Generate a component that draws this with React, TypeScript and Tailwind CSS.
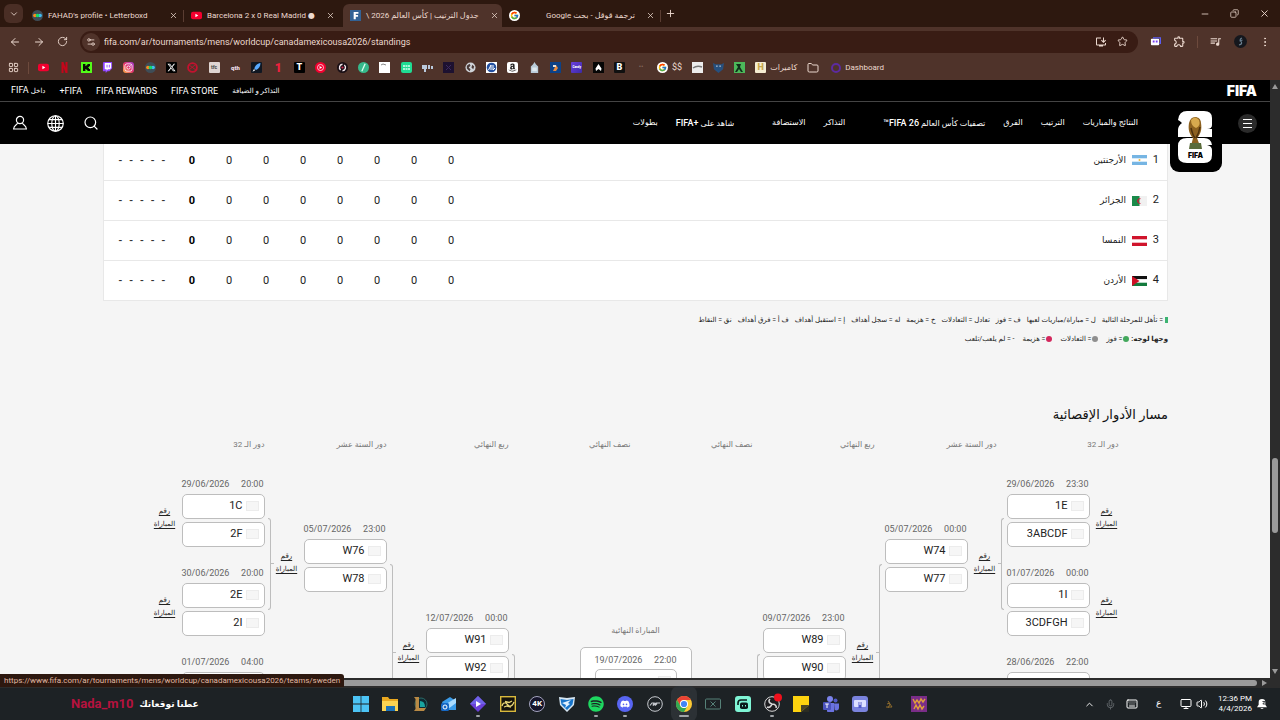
import type { ReactNode } from 'react';
import {
  ArrowLeft,
  ArrowRight,
  ChevronDown,
  ChevronUp,
  Copy,
  EllipsisVertical,
  Folder,
  Keyboard,
  LayoutGrid,
  Mic,
  Minus,
  Monitor,
  Plus,
  RotateCw,
  Search,
  Settings2,
  Star,
  Volume2,
  X,
} from 'lucide-react';
import { FaAmazon, FaDiscord, FaInstagram, FaSpotify } from 'react-icons/fa';
import { FaXTwitter } from 'react-icons/fa6';
import { FcGoogle } from 'react-icons/fc';
import { MdInstallDesktop, MdOutlineExtension, MdQueueMusic } from 'react-icons/md';

type Match = {
  date: string;
  time: string;
  teams: [string, string];
};

const leftRounds: Match[][] = [
  [
    { date: '29/06/2026', time: '20:00', teams: ['1C', '2F'] },
    { date: '30/06/2026', time: '20:00', teams: ['2E', '2I'] },
    { date: '01/07/2026', time: '04:00', teams: ['', ''] },
  ],
  [{ date: '05/07/2026', time: '23:00', teams: ['W76', 'W78'] }],
  [{ date: '12/07/2026', time: '00:00', teams: ['W91', 'W92'] }],
];

const rightRounds: Match[][] = [
  [{ date: '09/07/2026', time: '23:00', teams: ['W89', 'W90'] }],
  [{ date: '05/07/2026', time: '00:00', teams: ['W74', 'W77'] }],
  [
    { date: '29/06/2026', time: '23:30', teams: ['1E', '3ABCDF'] },
    { date: '01/07/2026', time: '00:00', teams: ['1I', '3CDFGH'] },
    { date: '28/06/2026', time: '22:00', teams: ['', ''] },
  ],
];

const roundTitles = [
  'دور الـ 32',
  'دور الستة عشر',
  'ربع النهائي',
  'نصف النهائي',
  'نصف النهائي',
  'ربع النهائي',
  'دور الستة عشر',
  'دور الـ 32',
];

/* ---------- browser ---------- */

function LetterboxdIcon() {
  return (
    <svg viewBox="0 0 12 12" className="size-[11px] shrink-0">
      <circle cx="6" cy="6" r="6" fill="#3f4d57" />
      <circle cx="3.2" cy="6" r="2" fill="#ff8a1c" />
      <circle cx="8.8" cy="6" r="2" fill="#3fbcf4" />
      <circle cx="6" cy="6" r="2" fill="#16d965" />
    </svg>
  );
}

function YoutubeIcon() {
  return (
    <svg viewBox="0 0 12 12" className="size-[11px] shrink-0">
      <rect y="1.8" width="12" height="8.4" rx="2.2" fill="#f3002f" />
      <path d="M4.8 4.2v3.6L8 6z" fill="#fff" />
    </svg>
  );
}

type TabProps = { icon: ReactNode; title: string; active?: boolean; rtl?: boolean; divider?: boolean };

function Tab({ icon, title, active, rtl, divider }: TabProps) {
  return (
    <div
      className={`mt-1 flex w-[159px] items-center gap-[5px] rounded-t-md pr-2 pl-[7px] ${active ? 'bg-[#4f332a]' : ''}`}
    >
      {icon}
      <button
        role="tab"
        aria-selected={!!active}
        dir={rtl ? 'rtl' : 'ltr'}
        className={`flex-1 text-start text-[8px] leading-4 whitespace-nowrap ${rtl ? 'pr-[6px]' : ''}`}
      >
        {title}
      </button>
      <button aria-label="Close tab">
        <X className="size-[9px]" />
      </button>
      {divider && <span className="-mr-2 h-3 w-px bg-[#5a3d32]" />}
    </div>
  );
}

function TabStrip() {
  return (
    <div className="flex h-[27px] items-stretch bg-[#2d180f] pl-1">
      <button aria-label="Search tabs" className="mt-1 flex size-[19px] items-center justify-center rounded-md bg-[#4a2e25]">
        <ChevronDown className="size-[10px]" />
      </button>
      <div role="tablist" className="ml-[2px] flex">
        <Tab icon={<LetterboxdIcon />} title="FAHAD's profile • Letterboxd" divider />
        <Tab icon={<YoutubeIcon />} title="Barcelona 2 x 0 Real Madrid ●" />
        <Tab
          icon={
            <svg viewBox="0 0 12 12" className="size-[11px] shrink-0">
              <path d="M0 0h12v12H0z" fill="#326295" />
              <path d="M4 2.2h5.2v2H6.3v1.3h2.5v1.9H6.3V10H4z" fill="#fff" />
            </svg>
          }
          title="جدول الترتيب | كأس العالم 2026 \"
          active
          rtl
        />
        <Tab
          icon={<span className="rounded-full bg-white p-px"><FcGoogle className="size-[9px]" /></span>}
          title="ترجمة قوقل - بحث Google"
          rtl
          divider
        />
      </div>
      <button aria-label="New tab" className="ml-1">
        <Plus className="size-[11px]" />
      </button>
      <div className="ml-auto flex items-center gap-5 pr-[10px]">
        <button aria-label="Minimize"><Minus className="size-[10px]" /></button>
        <button aria-label="Restore"><Copy className="size-[9px] -scale-x-100" /></button>
        <button aria-label="Close"><X className="size-[11px]" /></button>
      </div>
    </div>
  );
}

function Toolbar() {
  return (
    <div className="flex h-[29px] items-center pr-[9px] pl-[9px]">
      <div className="flex w-[71px] items-center gap-3">
        <button aria-label="Back"><ArrowLeft className="size-3" /></button>
        <button aria-label="Forward"><ArrowRight className="size-3" /></button>
        <button aria-label="Reload"><RotateCw className="size-[11px]" /></button>
      </div>
      <div className="flex h-[22px] flex-1 items-center gap-1 rounded-full bg-[#391c14] pr-[10px] pl-[2px]">
        <button aria-label="Site information" className="flex size-[18px] items-center justify-center rounded-full bg-[#50332a]">
          <Settings2 className="size-[10px]" />
        </button>
        <input
          aria-label="Address"
          readOnly
          className="flex-1 bg-transparent text-[9px] leading-4 outline-none"
          value="fifa.com/ar/tournaments/mens/worldcup/canadamexicousa2026/standings"
        />
        <button aria-label="Install app"><MdInstallDesktop className="size-3" /></button>
        <button aria-label="Bookmark" className="ml-[6px]"><Star className="size-[11px]" /></button>
      </div>
      <div className="ml-3 flex items-center gap-3">
        <svg viewBox="0 0 12 12" className="size-[11px]">
          <rect x="1" y="3" width="9" height="7" rx="1" fill="#fff" />
          <path d="M4 3V2h7.5v6H10" stroke="#5b5cf0" strokeWidth="1.4" fill="none" />
          <path d="M3 5h2v2H3zM6.3 5h2v2h-2z" fill="#7a3ff2" />
        </svg>
        <button aria-label="Extensions"><MdOutlineExtension className="size-[13px]" /></button>
        <span className="-mx-px h-3 w-px bg-[#6d4a3d]" />
        <button aria-label="Media"><MdQueueMusic className="size-[13px]" /></button>
        <svg viewBox="0 0 13 13" className="size-[13px]">
          <circle cx="6.5" cy="6.5" r="6.5" fill="#15171d" />
          <path d="M8 3q-3 1-1 3.500T5 10M5.500 6l3-1" stroke="#6b8090" strokeWidth="1.200" fill="none" />
        </svg>
        <button aria-label="Browser menu"><EllipsisVertical className="size-3" /></button>
      </div>
    </div>
  );
}

type TileProps = { className: string; children?: ReactNode };

function Tile({ className, children }: TileProps) {
  return (
    <span className={`flex size-[11px] items-center justify-center rounded-[1px] leading-none font-black ${className}`}>
      {children}
    </span>
  );
}

const bookmarks: ReactNode[] = [
  <YoutubeIcon />,
  <svg viewBox="0 0 11 11" className="size-[11px]"><path d="M2.5 0h2l2 5.5V0h2v11h-2l-2-5.5V11h-2z" fill="#c4061b" /></svg>,
  <svg viewBox="0 0 11 11" className="size-[11px]"><path d="M0 0h11v11H0z" fill="#53fc18" /><path d="M2 2h2.4v2h1V3h1V2H9v2.3H8v1h-.9v.6H8v1h1V9H6.4V8h-1V7h-1v2H2z" fill="#0a1005" /></svg>,
  <svg viewBox="0 0 12 12" className="size-[11px]"><path d="M1.500 0H11v7L8 10H6l-2 2v-2H1V2z" fill="#9146ff" /><path d="M3 1h7v5.500L8.500 8h-2L5 9.500V8H3z" fill="#fff" /><path d="M5.500 3v3M8 3v3" stroke="#9146ff" /></svg>,
  <Tile className="rounded-[3px] bg-linear-to-tr from-[#fdb13a] via-[#e4316c] to-[#a033d6]"><FaInstagram className="size-[9px] text-white" /></Tile>,
  <LetterboxdIcon />,
  <Tile className="bg-black"><FaXTwitter className="size-[9px] text-white" /></Tile>,
  <svg viewBox="0 0 12 12" className="size-[11px]"><circle cx="6" cy="6" r="4.8" fill="none" stroke="#c3122f" strokeWidth="2" /><path d="M2 3l8 6M3 8l6-5" stroke="#c3122f" /></svg>,
  <Tile className="bg-[#dfd5d2] text-[5px] text-[#555]">tfc</Tile>,
  <Tile className="text-[6px] text-[#eadde5]">qth</Tile>,
  <svg viewBox="0 0 11 11" className="size-[11px]"><rect width="11" height="11" rx="1" fill="#101722" /><path d="M9.500 1C6 1.300 4 4 3.300 6.500L5 8c2.500-1 4.500-3.500 4.500-7z" fill="#58a9ff" /><path d="M3 7l1.200 1.200L1.500 9.800z" fill="#fff" /></svg>,
  <Tile className="text-[12px] text-[#f0203f]">1</Tile>,
  <Tile className="bg-black text-[9px] text-white">T</Tile>,
  <svg viewBox="0 0 12 12" className="size-[11px]"><circle cx="6" cy="6" r="6" fill="#f3002f" /><circle cx="6" cy="6" r="3.300" fill="none" stroke="#fff" strokeWidth=".8" /><path d="M5 4.300v3.400L7.800 6z" fill="#fff" /></svg>,
  <svg viewBox="0 0 12 12" className="size-[11px]"><circle cx="6" cy="6" r="6" fill="#1b1016" /><path d="M6 2.500a3.500 3.500 0 00-2 6.200M6 9.500a3.500 3.500 0 002-6.200" stroke="#f4e8ee" strokeWidth="1.500" fill="none" /><circle cx="6" cy="6" r="1.200" fill="#d02653" /></svg>,
  <svg viewBox="0 0 12 12" className="size-[11px]"><circle cx="6" cy="6" r="6" fill="#36b98b" /><path d="M7.800 2L4.200 10" stroke="#d7fff0" strokeWidth="1.400" /></svg>,
  <svg viewBox="0 0 11 11" className="size-[11px]"><path d="M0 0h11v11H0z" fill="#fff" /><path d="M2 3l2-1 3 1" stroke="#888" fill="none" /></svg>,
  <svg viewBox="0 0 11 11" className="size-[11px]"><rect width="11" height="11" rx="2" fill="#1fdc93" /><path d="M2 4h7M2 7h7" stroke="#d8fff0" strokeWidth="1.500" strokeDasharray="2 .5" /></svg>,
  <svg viewBox="0 0 11 11" className="size-[11px]"><path d="M0 3h5v4H4v3H2V7H0zM6 3h2v4H6zM9 4h2v3H9z" fill="#b9c9dc" /></svg>,
  <svg viewBox="0 0 11 11" className="size-[11px]"><path d="M0 0h11v11H0z" fill="#1d1130" /><path d="M3 3l5 5M8 3L3 8" stroke="#3d2a60" /></svg>,
  <svg viewBox="0 0 12 12" className="size-[11px]"><circle cx="6" cy="6" r="5.500" fill="#cfd3d8" /><path d="M2 4l3-2 1 2-2 2 2 2-1 2-3-3zM8 3l2 2-1 3-2-2z" fill="#4a3a38" /></svg>,
  <svg viewBox="0 0 11 11" className="size-[11px]"><path d="M0 0h11v11H0z" fill="#fff" /><circle cx="5.500" cy="5.500" r="4.800" fill="#2450a0" /><path d="M2.500 8L5 3v5M7 3v5M7 8l2-2" stroke="#fff" fill="none" /></svg>,
  <Tile className="rounded-[2px] bg-white"><FaAmazon className="size-[9px] text-[#221f1f]" /></Tile>,
  <svg viewBox="0 0 12 12" className="size-[11px]"><path d="M6 0l1.500 2.500L10 5v7H2V5l2.500-2.500z" fill="#b9cbd8" /><path d="M3.500 6h5v4h-5z" fill="#dfe9ef" /></svg>,
  <svg viewBox="0 0 11 11" className="size-[11px]"><path d="M0 0h11v11H0z" fill="#0d4287" /><path d="M3 9l3-6 2 3-2 3z" fill="#e8893b" /><path d="M3 3h3v2H3z" fill="#e8e2d8" /></svg>,
  <Tile className="bg-linear-to-br from-[#6b3fe0] to-[#3c2aa5] text-[3px] text-white">Candy</Tile>,
  <svg viewBox="0 0 11 11" className="size-[11px]"><path d="M0 0h11v11H0z" fill="#060606" /><path d="M5.500 2L8.500 6.500 8 9 5.500 7 3 9l-.5-2.500z" fill="#fff" /></svg>,
  <Tile className="bg-[#101010] text-[9px] text-white">B</Tile>,
];

function Bookmarks() {
  return (
    <nav aria-label="Bookmarks" className="flex h-6 items-center pb-px pl-2 text-[9px]">
      <button aria-label="Apps"><LayoutGrid className="size-[11px]" /></button>
      <span className="mx-[9px] h-3 w-px bg-[#6d4a3d]" />
      <div className="flex w-[587px] items-center justify-between">
        {bookmarks.map((icon, i) => (
          <a key={i} href="#" aria-label={`Bookmark ${i + 1}`}>
            {icon}
          </a>
        ))}
      </div>
      <span className="mx-3 w-[8px] text-center text-[7px] text-[#85685e]">••</span>
      <a href="#" className="flex items-center gap-1">
        <span className="rounded-full bg-white p-px"><FcGoogle className="size-[9px]" /></span>$$
      </a>
      <div className="ml-[10px] flex items-center gap-[10px]">
        <svg viewBox="0 0 11 11" className="size-[11px]"><path d="M0 0h11v11H0z" fill="#ececec" /><path d="M1 6q4-3 9-1" stroke="#777" strokeWidth="1.500" fill="none" /></svg>
        <svg viewBox="0 0 12 12" className="size-[11px]"><path d="M0 1l3 1.500h6L12 1l-1 7-5 4-5-4z" fill="#27507e" /><path d="M3.500 4.500h1.500M7 4.500h1.500" stroke="#fff" /></svg>
        <svg viewBox="0 0 11 11" className="size-[11px]"><path d="M0 0h11v11H0z" fill="#4cb85a" /><path d="M2 2h5L6 5l3 5H7L5 7 3 10H1l3-5z" fill="#10301a" /></svg>
        <a href="#" className="flex items-center gap-1">
          <Tile className="bg-[#f5ecd2] text-[9px] text-[#c8a84c]">H</Tile>
          <span className="text-[8px]">كاميرات</span>
        </a>
      </div>
      <Folder className="ml-[10px] size-3" />
      <a href="#" className="ml-3 flex items-center gap-1 text-[8px]">
        <span className="size-[10px] rounded-full border-2 border-[#5c2ba0]" />
        Dashboard
      </a>
    </nav>
  );
}

/* ---------- site header ---------- */

function Emblem() {
  return (
    <svg viewBox="0 0 52 62" className="h-[62px] w-[52px]">
      <path d="M0 0h52v53a9 9 0 0 1-9 9H9a9 9 0 0 1-9-9z" fill="#000" />
      <path d="M8 10q1-9 9-9h17q8 0 8 7v7q0 4-5 4h5v8H8v-7q0-4 4-7-2-2-4-3z" fill="#fff" />
      <path d="M17 28h17q7 0 8 7h-5q5 1 5 5v5q0 8-8 8H17q-9 0-9-8V36q0-8 9-8z" fill="#fff" />
      <path d="M21 36l2-8c-4-4-5-9-4-15 1-4 3-6 6-6s6 2 6 6c1 6 0 11-4 15l3 8z" fill="#8d611f" />
      <path d="M21 10q4-5 8 0 2 6-3 8-5-2-5-8z" fill="#d7a94e" />
      <path d="M21 18q2 8 4 10M30 17q-1 6-4 11" stroke="#4d300d" strokeWidth="1.500" fill="none" />
      <path d="M20 33h11l1 6H19z" fill="#5a6b3a" />
      <text x="25.500" y="48" textAnchor="middle" fontSize="7" fontWeight="900" fontFamily="Inter, sans-serif" fill="#000">FIFA</text>
    </svg>
  );
}

function SiteHeader() {
  return (
    <header className="relative z-10 bg-black text-white">
      <div className="flex h-[22px] items-center border-b border-[#444] pr-[13px] pl-[11px] text-[9px] leading-3">
        <nav className="flex items-center gap-[14px]">
          <a href="#" dir="rtl"><span className="text-[7px]">داخل</span> FIFA</a>
          <a href="#" dir="rtl">FIFA+</a>
          <a href="#">FIFA REWARDS</a>
          <a href="#">FIFA STORE</a>
          <a href="#" dir="rtl" className="text-[7px]">التذاكر و الضيافة</a>
        </nav>
        <a href="#" className="ml-auto font-[Inter] text-[14px] font-black">FIFA</a>
      </div>
      <div className="flex h-[42px] items-center pr-[13px] pl-3">
        <div className="flex items-center gap-[19px]">
          <button aria-label="Account">
            <svg viewBox="0 0 16 16" className="size-4" fill="none" stroke="#fff" strokeWidth="1.200">
              <circle cx="8" cy="5" r="3.600" />
              <path d="M5.500 8C5 10.500 2 9.800 1.600 14h12.800C14 9.800 11 10.500 10.500 8" />
            </svg>
          </button>
          <button aria-label="Language">
            <svg viewBox="0 0 16 16" className="size-[17px]" fill="none" stroke="#fff" strokeWidth="1.100">
              <circle cx="8" cy="8" r="7.300" />
              <ellipse cx="8" cy="8" rx="3.500" ry="7.300" />
              <path d="M8 .7v14.600M.7 8h14.600M1.800 4.300h12.400M1.800 11.700h12.400" />
            </svg>
          </button>
          <button aria-label="Search"><Search className="size-4" strokeWidth={1.8} /></button>
        </div>
        <nav dir="rtl" className="mr-8 ml-auto flex items-center gap-[18px] text-[8px] leading-3 font-medium whitespace-nowrap">
          <a href="#">النتائج والمباريات</a>
          <a href="#">الترتيب</a>
          <a href="#">الفرق</a>
          <a href="#">تصفيات كأس العالم <span className="text-[9px]">FIFA 26™</span></a>
          <a href="#" className="ms-5">التذاكر</a>
          <a href="#">الاستضافة</a>
          <a href="#" className="ms-5">شاهد على <span className="text-[9px]">+FIFA</span></a>
          <a href="#">بطولات</a>
        </nav>
        <a href="#" aria-label="FIFA World Cup 26" className="h-[27px] self-start pt-[8px]">
          <Emblem />
        </a>
        <button aria-label="Menu" className="ml-4 flex size-[19px] flex-col items-center justify-center gap-[3px] rounded-full bg-[#2b2b2b]">
          <span className="h-px w-[9px] bg-white" />
          <span className="h-px w-[9px] bg-white" />
          <span className="h-px w-[9px] bg-white" />
        </button>
      </div>
    </header>
  );
}

/* ---------- standings ---------- */

const flags = {
  argentina: (
    <svg viewBox="0 0 15 10" className="h-[10px] w-[15px]">
      <path d="M0 0h15v10H0z" fill="#76b5e3" />
      <path d="M0 3.300h15v3.400H0z" fill="#fff" />
      <circle cx="7.500" cy="5" r="1" fill="#f1b83b" />
    </svg>
  ),
  algeria: (
    <svg viewBox="0 0 15 10" className="h-[10px] w-[15px]">
      <path d="M0 0h15v10H0z" fill="#f1f1f1" />
      <path d="M0 0h7.500v10H0z" fill="#1a8a4a" />
      <path d="M9.300 3.200a2.500 2.500 0 1 0 0 3.600 2 2 0 1 1 0-3.600z" fill="#d21034" />
    </svg>
  ),
  austria: (
    <svg viewBox="0 0 15 10" className="h-[10px] w-[15px]">
      <path d="M0 0h15v10H0z" fill="#d0142c" />
      <path d="M0 3.300h15v3.400H0z" fill="#fff" />
    </svg>
  ),
  jordan: (
    <svg viewBox="0 0 15 10" className="h-[10px] w-[15px]">
      <path d="M0 0h15v3.300H0z" fill="#111" />
      <path d="M0 3.300h15v3.400H0z" fill="#fff" />
      <path d="M0 6.700h15V10H0z" fill="#137a3d" />
      <path d="M0 0l7.500 5L0 10z" fill="#ce1126" />
    </svg>
  ),
};

const teams = [
  { name: 'الأرجنتين', flag: flags.argentina },
  { name: 'الجزائر', flag: flags.algeria },
  { name: 'النمسا', flag: flags.austria },
  { name: 'الأردن', flag: flags.jordan },
];

function Standings() {
  return (
    <table dir="rtl" className="-mt-1 w-full border-x border-[#e8e8e8] bg-white text-[11px] text-[#222]">
      <tbody>
        {teams.map((team, i) => (
          <tr key={team.name} className="h-10 border-b border-[#e8e8e8]">
            <th scope="row" className="ps-[8px] pt-px text-start font-normal">
              <div className="flex items-center">
                <span className="w-3">{i + 1}</span>
                {team.flag}
                <a href="#" className="ms-[6px] text-[9px]">{team.name}</a>
              </div>
            </th>
            {[0, 0, 0, 0, 0, 0, 0].map((value, col) => (
              <td key={col} className="w-[37px] pt-[2px] text-center">{value}</td>
            ))}
            <td className="w-[37px] pt-[2px] text-center font-bold text-black">0</td>
            <td className="w-[70px] pt-[2px]">
              <div className="flex justify-center gap-[7px] pr-px pl-[7px] font-medium text-[#333]">
                {[1, 2, 3, 4, 5].map((game) => (
                  <span key={game}>-</span>
                ))}
              </div>
            </td>
          </tr>
        ))}
      </tbody>
    </table>
  );
}

const abbreviations = [
  'ل = مباراة/مباريات لعبها',
  'ف = فوز',
  'تعادل = التعادلات',
  'خ = هزيمة',
  'له = سجل أهداف',
  'إ = استقبل أهداف',
  'ف أ = فرق أهداف',
  'نق = النقاط',
];

function Legend() {
  return (
    <div dir="rtl" className="mt-[13px] flex flex-col gap-[7px] text-[7px] leading-3 whitespace-nowrap text-[#222]">
      <div className="flex gap-[6px]">
        <span className="flex items-center gap-[2px]">
          <span className="h-[6px] w-[3px] bg-[#3cb371]" />= تأهل للمرحلة التالية
        </span>
        {abbreviations.map((item) => (
          <span key={item}>{item}</span>
        ))}
      </div>
      <div className="flex gap-[8px]">
        <span className="flex items-center gap-[2px]">
          <b>وجها لوجه:</b>
          <span className="flex items-center gap-[1px]"><i className="size-[6px] rounded-full bg-[#43a85c]" />= فوز</span>
        </span>
        <span className="flex items-center gap-[1px]"><i className="size-[6px] rounded-full bg-[#8f8f8f]" />= التعادلات</span>
        <span className="flex items-center gap-[1px]"><i className="size-[6px] rounded-full bg-[#d3275c]" />= هزيمة</span>
        <span>- = لم يلعب/تلعب</span>
      </div>
    </div>
  );
}

/* ---------- knockout bracket ---------- */

function TeamSlot({ code }: { code: string }) {
  return (
    <div className="flex h-[25px] items-center justify-end gap-[3px] rounded-[5px] border border-[#bdbdbd] bg-white pr-[5px] text-[11px] text-[#222]">
      {code}
      <span className="h-[10px] w-[13px] border border-[#ececec] bg-[#f6f6f6]" />
    </div>
  );
}

function MatchCard({ match, side }: { match: Match; side: 'left' | 'right' }) {
  return (
    <div className={`flex h-[70px] ${side === 'left' ? 'flex-row-reverse' : ''}`}>
      <div className="flex w-[83px] flex-col gap-[3px]">
        <div className="flex justify-between pr-px text-[9px] leading-[14px] text-[#666]">
          <span>{match.date}</span>
          <span>{match.time}</span>
        </div>
        {match.teams.map((code, i) => (
          <TeamSlot key={i} code={code} />
        ))}
      </div>
      <a
        href="#"
        dir="rtl"
        className={`flex-1 pt-7 text-center text-[7px] leading-[13px] text-[#222] underline underline-offset-2 ${side === 'left' ? 'pr-[6px]' : 'pl-[6px]'}`}
      >
        رقم المباراة
      </a>
    </div>
  );
}

// one entry per round, outermost first
const roundOffset = ['pt-0', 'pt-[45px]', 'pt-[134px]'];
const connectorSize = ['mt-[41px] h-[92px]', 'mt-[87px] h-[178px]', 'mt-[177px] h-[356px]'];

type RoundProps = { matches: Match[]; depth: number; side: 'left' | 'right' };

function Round({ matches, depth, side }: RoundProps) {
  const left = side === 'left';
  return (
    <div className={`flex w-[122px] ${left ? '' : 'flex-row-reverse'}`}>
      <div className={`flex flex-1 flex-col gap-[19px] ${roundOffset[depth]}`}>
        {matches.map((match) => (
          <MatchCard key={match.date} match={match} side={side} />
        ))}
      </div>
      <div className={`flex w-[11px] items-center ${left ? 'pl-[3px]' : 'flex-row-reverse pr-[3px]'} ${connectorSize[depth]}`}>
        <span
          className={`h-full w-[3px] border-y border-[#bdbdbd] ${left ? 'rounded-r-[3px] border-r' : 'rounded-l-[3px] border-l'}`}
        />
        {depth < 2 && <span className="h-px w-[3px] bg-[#bdbdbd]" />}
      </div>
    </div>
  );
}

function Bracket() {
  return (
    <section>
      <h2 dir="rtl" className="mt-[58px] text-[13px] leading-6 text-[#111]">مسار الأدوار الإقصائية</h2>
      <div className="mt-3 grid grid-cols-[112px_repeat(7,122px)] justify-center text-right text-[8px] leading-3 text-[#777]">
        {roundTitles.map((title, i) => (
          <span key={i} dir="rtl">{title}</span>
        ))}
      </div>
      <div className="mt-[26px] flex justify-center">
        {leftRounds.map((matches, i) => (
          <Round key={i} matches={matches} depth={i} side="left" />
        ))}
        <div className="flex w-[232px] flex-col items-center pt-[146px]">
          <h3 dir="rtl" className="text-[8px] leading-4 text-[#777]">المباراة النهائية</h3>
          <div className="mt-2 w-[112px] rounded-[5px] border border-[#bdbdbd] bg-white px-[14px] pt-[5px] pb-3">
            <div className="mb-[2px] flex justify-between text-[9px] leading-[14px] text-[#666]">
              <span>19/07/2026</span>
              <span>22:00</span>
            </div>
            <TeamSlot code="" />
          </div>
        </div>
        {rightRounds.map((matches, i) => (
          <Round key={i} matches={matches} depth={2 - i} side="right" />
        ))}
      </div>
    </section>
  );
}

/* ---------- desktop taskbar ---------- */

type AppProps = { children: ReactNode; name: string; open?: boolean; active?: boolean };

function TaskbarApp({ children, name, open, active }: AppProps) {
  return (
    <button
      aria-label={name}
      className={`flex h-[26px] w-4 flex-col items-center justify-between rounded-[3px] pt-[5px] ${active ? 'bg-[#2c3135] ring-[5px] ring-[#2c3135]' : ''}`}
    >
      {children}
      {open && <span className={`h-[2px] rounded-full bg-[#a0a4a8] ${active ? 'w-[10px]' : 'w-1'}`} />}
    </button>
  );
}

function Taskbar() {
  return (
    <footer className="grid h-8 grid-cols-[1fr_574px_1fr] items-center bg-[#1d2225] text-white">
      <p dir="rtl" className="flex items-center justify-end gap-[6px] justify-self-start pl-[71px] text-[13px] leading-4 font-bold whitespace-nowrap">
        <span className="text-[9px]">عطنا توقعاتك</span>
        <span className="text-[#b5123f]">Nada_m10</span>
      </p>
      <div className="flex justify-between">
        <TaskbarApp name="Start">
          <svg viewBox="0 0 16 16" className="size-4"><path d="M0 0h7.600v7.600H0zM8.400 0H16v7.600H8.400zM0 8.400h7.600V16H0zM8.400 8.400H16V16H8.400z" fill="#4cc4f5" /></svg>
        </TaskbarApp>
        <TaskbarApp name="Files">
          <svg viewBox="0 0 16 16" className="size-4"><path d="M0 1h6l1.500 2H16v12H0z" fill="#e9a820" /><path d="M0 5h16v10H0z" fill="#fbd352" /><path d="M4 10h9v5H4z" fill="#1c72b8" /></svg>
        </TaskbarApp>
        <TaskbarApp name="League">
          <svg viewBox="0 0 16 16" className="size-4"><circle cx="9" cy="8" r="6" fill="#0e2b33" stroke="#2b6a68" /><path d="M8 5q5 0 5 6H8z" fill="#19a5a0" /><path d="M2 1h5v11h7l-2 3H2l1.500-2V3z" fill="#b98a45" /></svg>
        </TaskbarApp>
        <TaskbarApp name="Outlook">
          <svg viewBox="0 0 16 16" className="size-4"><path d="M1 6l8-5 6 4v9H4z" fill="#3a9be8" /><path d="M5 8l10-6v5L7 13z" fill="#a9dcff" /><rect y="7" width="8" height="8" rx="1.500" fill="#1668c4" /><circle cx="4" cy="11" r="2" fill="none" stroke="#fff" /></svg>
        </TaskbarApp>
        <TaskbarApp name="Player" open>
          <svg viewBox="0 0 16 16" className="size-4"><path d="M8 0l8 8-8 8-8-8z" fill="#6a3fd8" /><path d="M8 0l8 8H0z" fill="#6f62e8" /><path d="M6 5v6l5-3z" fill="#fff" /></svg>
        </TaskbarApp>
        <TaskbarApp name="Game">
          <svg viewBox="0 0 16 16" className="size-4"><rect x=".7" y=".7" width="14.600" height="14.600" fill="#15130c" stroke="#d9b93c" strokeWidth="1.400" /><path d="M2 10q1-4 4-3l3 3q3 1 5-4M5 5.500l4 1 3-1.500M4 11l3-1 4 1" stroke="#e8d77a" strokeWidth="1.300" fill="none" /></svg>
        </TaskbarApp>
        <TaskbarApp name="4K">
          <span className="flex size-4 items-center justify-center rounded-full border border-[#a5a5c0] bg-[#15142a] text-[8px] font-bold">4K</span>
        </TaskbarApp>
        <TaskbarApp name="Rocket">
          <svg viewBox="0 0 16 16" className="size-4"><path d="M0 1l8 1 8-1-1 8-7 7-7-7z" fill="#d6e6f2" /><path d="M1.500 3L8 4l6.500-1-1 5.500L8 14 2.500 8.500z" fill="#1774c9" /><path d="M3 7l9-3-3 3 2 1-5 4 1-3z" fill="#dff0ff" /></svg>
        </TaskbarApp>
        <TaskbarApp name="Spotify" open><FaSpotify className="size-4 text-[#1ed760]" /></TaskbarApp>
        <TaskbarApp name="Discord" open>
          <span className="flex size-4 items-center justify-center rounded-full bg-[#5865f2]"><FaDiscord className="size-[10px]" /></span>
        </TaskbarApp>
        <TaskbarApp name="Forza">
          <svg viewBox="0 0 16 16" className="size-4" fill="none" stroke="#c8cbd0"><circle cx="8" cy="8" r="7.300" /><path d="M3 9.500l2-2.500h2L6 9.500 9 7h4M8 9.500l2-2" strokeWidth="1.200" /></svg>
        </TaskbarApp>
        <TaskbarApp name="Chrome" open active>
          <svg viewBox="0 0 16 16" className="size-4">
            <circle cx="8" cy="8" r="8" fill="#fcc934" />
            <path d="M1.070 4A8 8 0 0 1 14.930 4H8a4 4 0 0 0-3.460 6z" fill="#ea4335" />
            <path d="M1.070 4A8 8 0 0 0 8 16l3.460-6a4 4 0 0 1-6.920 0z" fill="#34a853" />
            <circle cx="8" cy="8" r="4" fill="#fff" />
            <circle cx="8" cy="8" r="3.100" fill="#4285f4" />
          </svg>
        </TaskbarApp>
        <TaskbarApp name="Xbox capture">
          <svg viewBox="0 0 16 16" className="size-4" fill="none" stroke="#568178"><rect x=".5" y="3" width="15" height="10" rx="1" /><path d="M5.500 5.500l5 5M10.500 5.500l-5 5" /></svg>
        </TaskbarApp>
        <TaskbarApp name="Streaming">
          <svg viewBox="0 0 16 16" className="size-4"><rect width="16" height="16" rx="3" fill="#7ff5d5" /><path d="M3 9V7q0-3 3-3h6" stroke="#0b1b1a" strokeWidth="1.600" fill="none" /><rect x="5" y="6.500" width="8" height="6.500" rx="1.800" fill="#0b1b1a" /><path d="M7.500 9v1.500M10.500 9v1.500" stroke="#7ff5d5" /></svg>
        </TaskbarApp>
        <TaskbarApp name="OBS" open>
          <svg viewBox="0 0 16 16" className="size-4 overflow-visible"><circle cx="8" cy="8" r="7.300" fill="#1d1d20" stroke="#d7d7d7" /><path d="M8 8c-3-1-4-3-2-5M8 8c3 0 5 2 4 4M8 8c-1 3-3 4-5 3" stroke="#d7d7d7" strokeWidth="1.600" fill="none" /><circle cx="14" cy="1.500" r="4" fill="#f0101c" /></svg>
        </TaskbarApp>
        <TaskbarApp name="Notes">
          <svg viewBox="0 0 16 16" className="size-4"><path d="M0 0h16v16H0z" fill="#fdd20f" /><path d="M8 16V9h8z" fill="#4a4426" /><path d="M8 16l8-7v7z" fill="#2b2c22" /></svg>
        </TaskbarApp>
        <TaskbarApp name="Teams">
          <svg viewBox="0 0 16 16" className="size-4"><circle cx="7" cy="3" r="3" fill="#7b83eb" /><circle cx="12.500" cy="4.500" r="2" fill="#5059c9" /><path d="M4 7h7v6a3.500 3.500 0 0 1-7 2zM11 7.500h5V12a2.500 2.500 0 0 1-4.500 1.500z" fill="#6a72e0" /><rect y="6" width="8" height="8" rx="1" fill="#4b53bc" /><path d="M2.200 8h3.600M4 8v4" stroke="#fff" /></svg>
        </TaskbarApp>
        <TaskbarApp name="Controller">
          <svg viewBox="0 0 16 16" className="size-4"><rect width="16" height="16" rx="3" fill="#7a83dd" /><rect x="2" y="4" width="12" height="7" rx="1" fill="#dde1ff" /><path d="M6.500 6h3v6h-3z" fill="#5059c9" /><path d="M8 6v3" stroke="#fff" /></svg>
        </TaskbarApp>
        <TaskbarApp name="Figure">
          <svg viewBox="0 0 16 16" className="size-4" fill="none" stroke="#8d6a2c"><path d="M7 5l2 3-2 4M9 8l2 3M6 8l3-1M5 11h6" /></svg>
        </TaskbarApp>
        <TaskbarApp name="Arcade">
          <svg viewBox="0 0 16 16" className="size-4"><path d="M0 0h16v16H0z" fill="#7a2d88" /><path d="M2 3l2 4 2-3 2 3 2-4 2 3 2-3M3 13l2-4 2 4 2-4 2 4 2-3" stroke="#e0a13a" strokeWidth="1.400" fill="none" /></svg>
        </TaskbarApp>
      </div>
      <div className="flex items-center justify-end pr-[13px]">
        <ChevronUp className="size-[11px]" />
        <Mic className="ml-[10px] size-[11px] text-[#666b70]" />
        <Keyboard className="ml-[10px] size-3" />
        <span className="ml-[18px] w-3 text-[9px]">ع</span>
        <Monitor className="ml-3 size-3" />
        <Volume2 className="ml-1 size-3" />
        <div className="ml-[10px] text-right text-[8px] leading-[10px]">
          <div>12:36 PM</div>
          <div>4/4/2026</div>
        </div>
        <svg viewBox="0 0 12 12" className="ml-[5px] size-[10px]"><path d="M6 0a4 4 0 0 0-4 4v3L0 10h12l-2-3V4a4 4 0 0 0-4-4zM4.500 11h3v1h-3z" fill="#fff" /><path d="M6.500 3h3L7 6h3" stroke="#1d2225" fill="none" /></svg>
      </div>
    </footer>
  );
}

export default function App() {
  return (
    <div className="relative flex h-screen flex-col overflow-hidden bg-[#4f332a] font-[Roboto,'DejaVu_Sans',sans-serif] text-[#ecd9cf]">
      <TabStrip />
      <Toolbar />
      <Bookmarks />
      <div className="flex min-h-0 flex-1">
        <div className="flex-1 overflow-hidden bg-[#f5f5f5]">
          <SiteHeader />
          <main className="pr-[102px] pl-[103px]">
            <Standings />
            <Legend />
            <Bracket />
          </main>
        </div>
        <div className="flex w-[10px] flex-col items-center bg-[#2c2c2c] py-1">
          <span className="border-x-[3px] border-b-[5px] border-x-transparent border-b-[#9a9a9a]" />
          <span className="flex-[367]" />
          <span className="w-[6px] flex-[75] rounded-full bg-[#9a9a9a]" />
          <span className="flex-[135]" />
          <span className="border-x-[3px] border-t-[5px] border-x-transparent border-t-[#9a9a9a]" />
        </div>
      </div>
      <div className="flex h-[10px] items-center bg-[#2c2c2c] pr-[13px]">
        <span className="h-[6px] flex-1 rounded-full bg-[#9a9a9a]" />
        <span className="ml-[5px] border-y-[3px] border-l-[5px] border-y-transparent border-l-[#9a9a9a]" />
      </div>
      <Taskbar />
      <div className="absolute bottom-[33px] left-0 rounded-tr-[3px] bg-[#2d180f] px-1 text-[8px] leading-[13px] text-[#e0b8a4]">
        https://www.fifa.com/ar/tournaments/mens/worldcup/canadamexicousa2026/teams/sweden
      </div>
    </div>
  );
}
